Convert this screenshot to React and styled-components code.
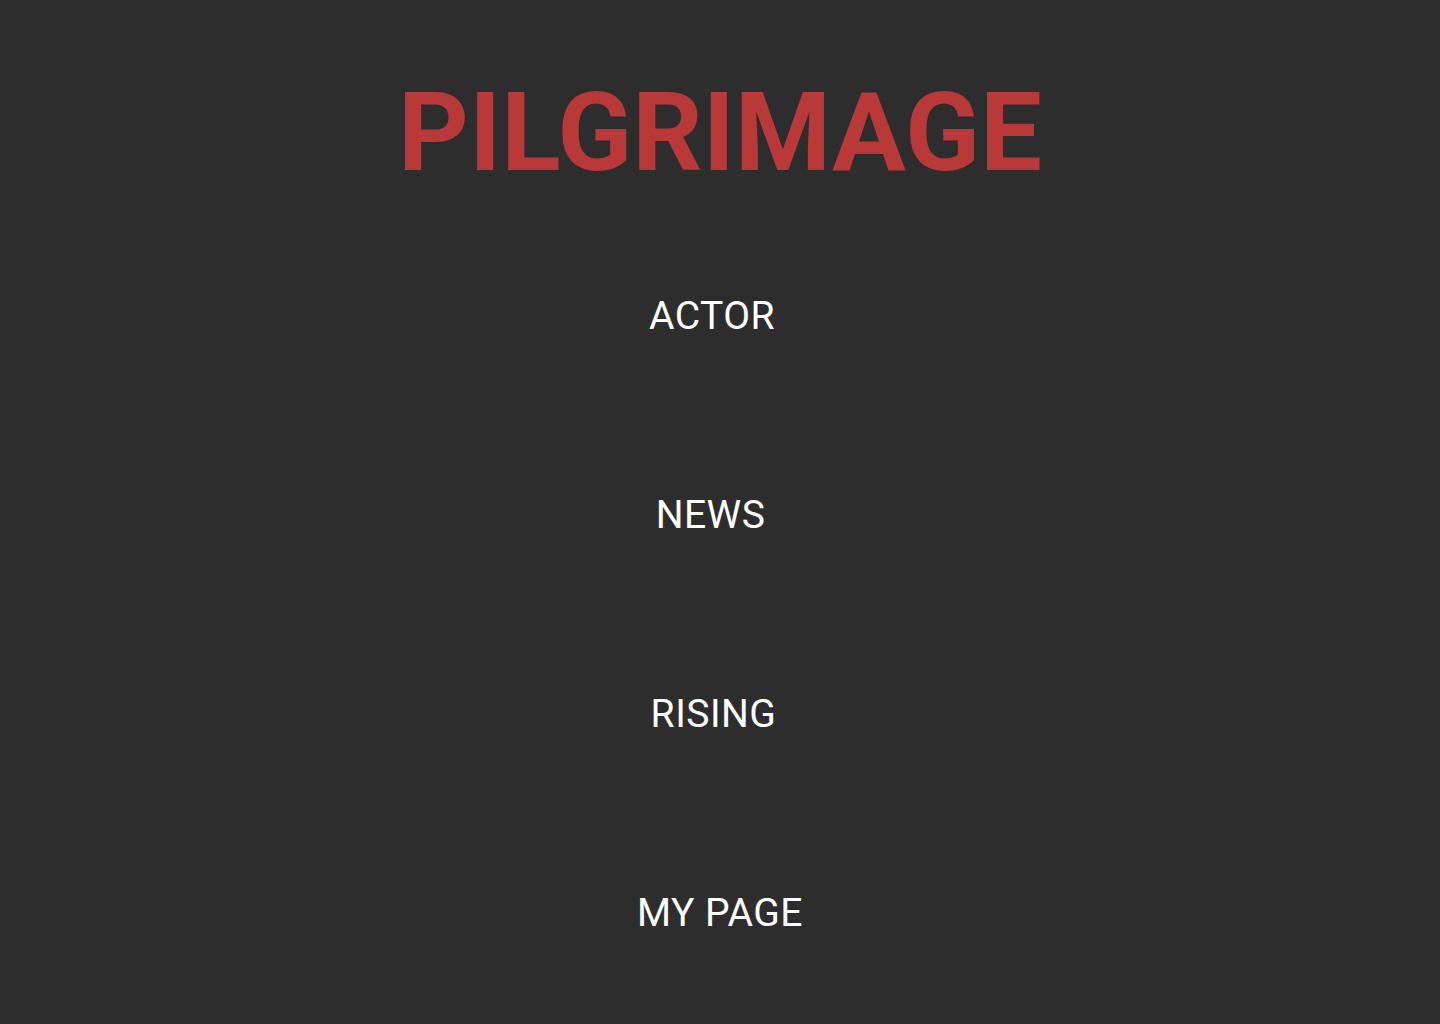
import React from "react";
import styled, { createGlobalStyle } from "styled-components";

const GlobalStyle = createGlobalStyle`
  html, body {
    margin: 0;
    padding: 0;
    background-color: #2d2d2d;
  }
  body {
    font-family: Roboto, "Liberation Sans", sans-serif;
  }
`;

// shift = how far each label sits left of the page centre
const menu = [
  { label: "ACTOR", shift: 16 },
  { label: "NEWS", shift: 19 },
  { label: "RISING", shift: 13 },
  { label: "MY PAGE", shift: 0 },
];

const App = () => {
  return (
    <>
      <GlobalStyle />
      <PageStyle>
        <TitleStyle>PILGRIMAGE</TitleStyle>
        <NavStyle>
          {menu.map((item) => (
            <NavItem key={item.label} href="#" $shift={item.shift}>
              {item.label}
            </NavItem>
          ))}
        </NavStyle>
      </PageStyle>
    </>
  );
};

export default App;

const PageStyle = styled.div`
  min-height: 1024px;
  background-color: #2d2d2d;
  display: flex;
  flex-direction: column;
  align-items: center;
  padding-top: 68px;
  box-sizing: border-box;
`;

const TitleStyle = styled.h1`
  margin: 0;
  font-family: Roboto, "Liberation Sans", sans-serif;
  font-size: 110px;
  font-weight: 700;
  line-height: normal;
  color: #b93838;
`;

const NavStyle = styled.nav`
  margin-top: 96px;
  display: flex;
  flex-direction: column;
  align-items: center;
  gap: 153px;
`;

const NavItem = styled.a`
  font-family: Roboto, "Liberation Sans", sans-serif;
  font-size: 39px;
  font-weight: 400;
  line-height: normal;
  letter-spacing: 0.5px;
  color: #ffffff;
  text-decoration: none;
  padding-right: ${(props) => props.$shift}px;
`;
